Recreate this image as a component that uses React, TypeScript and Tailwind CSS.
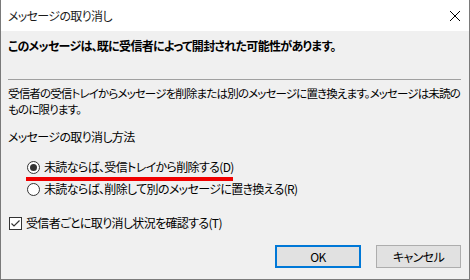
import React from "react";

const FONT = "font-['Meiryo_UI','Noto_Sans_CJK_JP',sans-serif] [font-feature-settings:'palt']";

function Radio({ checked }: { checked?: boolean }) {
  return (
    <svg width="13" height="13" viewBox="0 0 13 13" className="shrink-0">
      <circle cx="6.5" cy="6.5" r="6" fill="#fff" stroke="#333" strokeWidth="1" />
      {checked && <circle cx="6.5" cy="6.5" r="3.5" fill="#333" />}
    </svg>
  );
}

function Check() {
  return (
    <svg width="13" height="13" viewBox="0 0 13 13" className="shrink-0">
      <rect x="0.5" y="0.5" width="12" height="12" fill="#fff" stroke="#333" />
      <path d="M2.5 6.5 L5 9 L10.5 3.5" fill="none" stroke="#333" strokeWidth="1.2" />
    </svg>
  );
}

export default function App() {
  return (
    <div className={`relative w-[470px] h-[280px] flex flex-col border-x border-b border-[#7a7a7a] bg-[#f0f0f0] text-[12px] text-black tracking-[-0.65px] ${FONT}`}>
      {/* title bar */}
      <div className="h-[31px] shrink-0 bg-white flex items-center justify-between pl-[7px] pr-[9px]">
        <span className="text-[12px] leading-[16px] text-[#1a1a1a]">メッセージの取り消し</span>
        <svg width="10" height="10" viewBox="0 0 10 10">
          <path d="M0 0 L10 10 M10 0 L0 10" stroke="#000" strokeWidth="1" />
        </svg>
      </div>

      <div className="flex flex-col px-[7px] leading-[16px]">
        <div className="mt-[7px] font-bold tracking-[-0.7px] whitespace-nowrap">
          このメッセージは、既に受信者によって開封された可能性があります。
        </div>

        <div className="mt-[25px] h-px bg-[#a0a0a0] mr-[1px]" />

        <div className="mt-[5px] text-[11.5px] tracking-[-0.85px] whitespace-nowrap">
          受信者の受信トレイからメッセージを削除または別のメッセージに置き換えます。メッセージは未読の
          <br />
          ものに限ります。
        </div>

        <div className="mt-[12px]">メッセージの取り消し方法</div>

        <div className="mt-[14px] ml-[19px] flex flex-col gap-[6px]">
          <label className="flex items-center gap-[4px] h-[16px]">
            <Radio checked />
            <span>未読ならば、受信トレイから削除する(D)</span>
          </label>
          <label className="flex items-center gap-[4px] h-[16px]">
            <Radio />
            <span>未読ならば、削除して別のメッセージに置き換える(R)</span>
          </label>
        </div>

        <label className="mt-[18px] ml-px flex items-center gap-[4px] h-[16px]">
          <Check />
          <span>受信者ごとに取り消し状況を確認する(T)</span>
        </label>

        <div className="mt-[14px] flex justify-end gap-[15px] pr-[1px]">
          <button className="w-[86px] h-[23px] bg-[#e1e1e1] border-2 border-[#0078d7] text-[12px] leading-none">
            OK
          </button>
          <button className="w-[85px] h-[23px] bg-[#e1e1e1] border border-[#adadad] text-[12px] leading-none">
            キャンセル
          </button>
        </div>
      </div>

      {/* annotation underline */}
      <div className="absolute left-[25px] top-[177px] w-[207px] h-[4px] bg-[#f00000]" />
    </div>
  );
}
